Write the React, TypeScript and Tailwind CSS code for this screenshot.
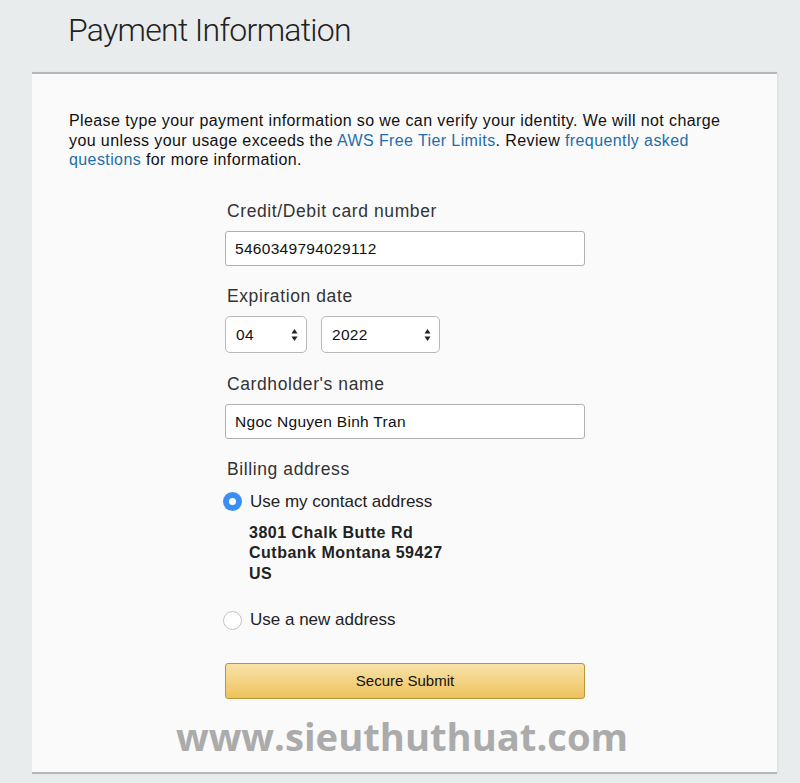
import React, { useState } from 'react';

const FONT = { fontFamily: '"Liberation Sans", Arial, sans-serif' };

const SelectBox: React.FC<{ value: string; width: string }> = ({ value, width }) => (
  <div
    className={`${width} h-[37px] flex items-center justify-between pl-[10px] pr-[8px] pt-[1px] bg-white border border-[#b8b8b8] rounded-[5px] text-[15.5px] tracking-[0.3px] text-[#111]`}
  >
    <span>{value}</span>
    <svg width="7" height="14" viewBox="0 0 7 14" className="text-[#222]">
      <path d="M3.5 1 L6.5 5.5 L0.5 5.5 Z" fill="currentColor" />
      <path d="M3.5 13 L6.5 8.5 L0.5 8.5 Z" fill="currentColor" />
    </svg>
  </div>
);

const Radio: React.FC<{ checked: boolean; label: string; onClick: () => void }> = ({ checked, label, onClick }) => (
  <button onClick={onClick} className="flex items-center h-5 text-left">
    {checked ? (
      <span className="w-[19px] h-[19px] rounded-full bg-[#3b8ef3] flex items-center justify-center -ml-[2px]">
        <span className="w-[7px] h-[7px] rounded-full bg-white" />
      </span>
    ) : (
      <span className="w-[19px] h-[19px] rounded-full bg-white border border-[#c4c4c4] -ml-[2px]" />
    )}
    <span className="ml-[8px] text-[17px] text-[#222]">{label}</span>
  </button>
);

export default function App() {
  const [useContact, setUseContact] = useState(true);

  return (
    <div className="w-[800px] h-[783px] bg-[#e9ecec] overflow-hidden" style={FONT}>
      {/* Header */}
      <div className="h-[72px] pl-[68px] pt-[10px]">
        <h1
          className="text-[32px] font-light text-[#222] leading-[40px] tracking-[-0.7px]"
          style={{ fontFamily: 'Roboto, "Liberation Sans", sans-serif' }}
        >
          Payment Information
        </h1>
      </div>

      {/* Card */}
      <div className="ml-[32px] w-[745px] h-[702px] bg-[#fafafa] border-t-2 border-b-2 border-[#b3b8b8] shadow-[1px_0_2px_rgba(0,0,0,0.06)]">
        <p className="pl-[37px] pr-[20px] pt-[37px] text-[16px] leading-[19.5px] tracking-[0.4px] text-[#111]">
          Please type your payment information so we can verify your identity. We will not charge
          <br />
          you unless your usage exceeds the <a className="text-[#1f6ea8]">AWS Free Tier Limits</a>. Review{' '}
          <a className="text-[#1f6ea8]">
            frequently asked
            <br />
            questions
          </a>{' '}
          for more information.
        </p>

        <div className="pl-[193px] pt-[31px] flex flex-col">
          <label className="pl-[2px] text-[17.5px] tracking-[0.6px] leading-5 text-[#333]">Credit/Debit card number</label>
          <div className="mt-[10px] w-[360px] h-[35px] flex items-center px-[9px] pt-[1px] bg-white border border-[#b0b0b0] rounded-[3px] text-[15.5px] tracking-[0.3px] text-[#111]">
            5460349794029112
          </div>

          <label className="mt-[20px] pl-[2px] text-[17.5px] tracking-[0.6px] leading-5 text-[#333]">Expiration date</label>
          <div className="mt-[10px] flex gap-[14px]">
            <SelectBox value="04" width="w-[82px]" />
            <SelectBox value="2022" width="w-[119px]" />
          </div>

          <label className="mt-[21px] pl-[2px] text-[17.5px] tracking-[0.6px] leading-5 text-[#333]">Cardholder's name</label>
          <div className="mt-[10px] w-[360px] h-[35px] flex items-center px-[9px] pt-[1px] bg-white border border-[#b0b0b0] rounded-[3px] text-[15.5px] tracking-[0.3px] text-[#111]">
            Ngoc Nguyen Binh Tran
          </div>

          <label className="mt-[20px] pl-[2px] text-[17.5px] tracking-[0.6px] leading-5 text-[#333]">Billing address</label>
          <div className="mt-[13px]">
            <Radio checked={useContact} label="Use my contact address" onClick={() => setUseContact(true)} />
          </div>
          <div className="mt-[11px] pl-[24px] text-[16px] leading-[20.5px] tracking-[0.5px] font-bold text-[#222]">
            <div>3801 Chalk Butte Rd</div>
            <div>Cutbank Montana 59427</div>
            <div>US</div>
          </div>
          <div className="mt-[26px]">
            <Radio checked={!useContact} label="Use a new address" onClick={() => setUseContact(false)} />
          </div>

          <button className="mt-[33px] w-[360px] h-[36px] rounded-[3px] border border-[#b6953f] bg-gradient-to-b from-[#f8e2a8] to-[#eec25a] text-[15px] text-[#111]">
            Secure Submit
          </button>
        </div>

        <div
          className="mt-[14px] pl-[144px] text-[38.2px] leading-[46px] font-bold text-[#ababab]"
          style={{ fontFamily: '"Open Sans", sans-serif' }}
        >
          www.sieuthuthuat.com
        </div>
      </div>
    </div>
  );
}
